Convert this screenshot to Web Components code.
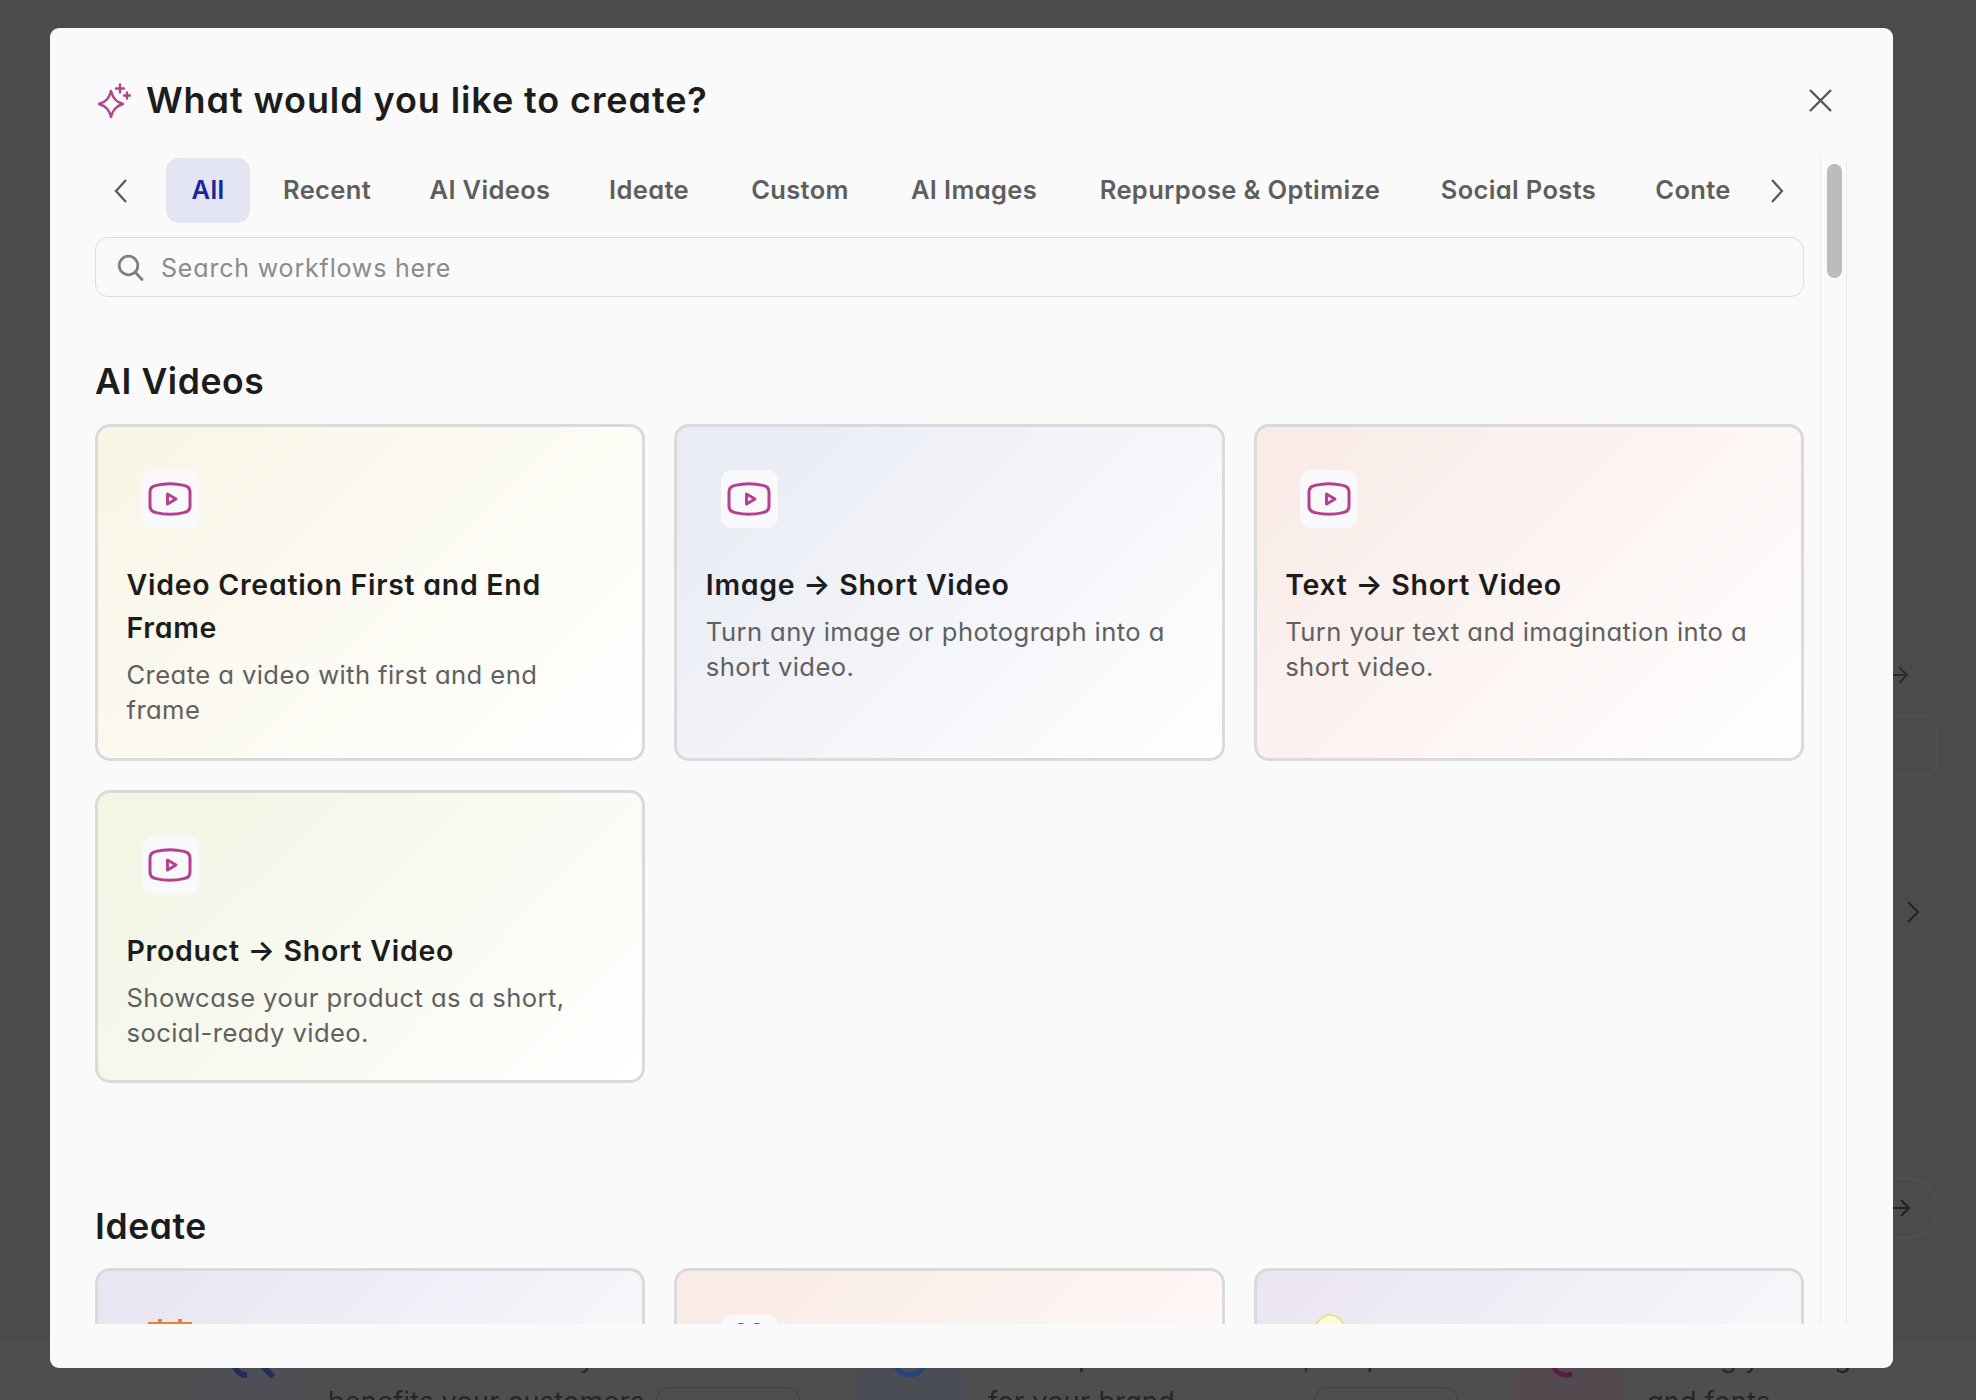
<!DOCTYPE html>
<html>
<head>
<meta charset="utf-8">
<style>
  html, body { margin: 0; height: 100%; }
  body { background: #4b4b4b; font-family: "Inter", "Liberation Sans", sans-serif; overflow: hidden; }
</style>
</head>
<body>
<page-backdrop></page-backdrop>
<create-dialog></create-dialog>

<script>
(function () {

  const FONT = `"Inter", "Liberation Sans", sans-serif`;

  const TABS = [
    ["All", 84, true], ["Recent", 140], ["AI Videos", 168], ["Ideate", 132], ["Custom", 152],
    ["AI Images", 178], ["Repurpose & Optimize", 336], ["Social Posts", 203], ["Conte", 128]
  ];

  const PLAY = `<svg viewBox="0 0 44 34" width="44" height="34" fill="none" stroke="#b5408f" stroke-width="3" stroke-linejoin="round">
    <path d="M2 10C2 6.500 4 4 8 3.400 17 1.400 27 1.400 36 3.400 40 4 42 6.500 42 10V24C42 27.500 40 30 36 30.600 27 32.600 17 32.600 8 30.600 4 30 2 27.500 2 24Z"/>
    <path d="M19.500 12 28 17 19.500 22Z"/>
  </svg>`;

  // ===== TAB STRIP =====
  class TabStrip extends HTMLElement {
    connectedCallback() {
      this.attachShadow({ mode: "open" }).innerHTML = `
        <style>
          :host { display: flex; align-items: center; height: 65px; }
          .nav { flex: none; width: 71px; padding-left: 18px; box-sizing: border-box; }
          .nav.next { width: 72px; padding-left: 37px; }
          svg { display: block; }
          .track { flex: 1; min-width: 0; display: flex; gap: 9px; overflow: hidden; }
          .tab { flex: none; height: 65px; line-height: 63px; text-align: center; font-size: 25.500px; font-weight: 600;
                 color: #5e5e5e; border-radius: 13px; font-feature-settings: "cv11"; white-space: nowrap; letter-spacing: .35px; }
          .tab.on { background: #e3e5f3; color: #1a249c; margin-right: -2px; }
        </style>
        <div class="nav"><svg width="16" height="26" viewBox="0 0 16 26" fill="none" stroke="#5a5a5a" stroke-width="2.300"><path d="M13 2 3 13l10 11"/></svg></div>
        <div class="track">${TABS.map(t => `<div class="tab${t[2] ? " on" : ""}" style="width:${t[1]}px">${t[0]}</div>`).join("")}</div>
        <div class="nav next"><svg width="16" height="26" viewBox="0 0 16 26" fill="none" stroke="#5a5a5a" stroke-width="2.300"><path d="M3 2l10 11L3 24"/></svg></div>
      `;
    }
  }

  // ===== SEARCH =====
  class SearchBox extends HTMLElement {
    connectedCallback() {
      this.attachShadow({ mode: "open" }).innerHTML = `
        <style>
          :host { display: flex; align-items: center; gap: 17px; height: 60px; box-sizing: border-box; margin-top: 14px;
                  border: 1.500px solid #dcdddd; border-radius: 13px; padding-left: 21px; }
          span { font-size: 25px; color: #8b8b8b; font-feature-settings: "cv11"; letter-spacing: .82px; margin-top: 2px; }
        </style>
        <svg width="27" height="27" viewBox="0 0 27 27" fill="none" stroke="#808080" stroke-width="2.800" stroke-linecap="round"><circle cx="11.500" cy="11.500" r="9.300"/><path d="M18.500 18.500 25 25.500"/></svg>
        <span>Search workflows here</span>
      `;
    }
  }

  // ===== WORKFLOW CARD =====
  class WorkflowCard extends HTMLElement {
    connectedCallback() {
      const from = this.getAttribute("tint") || "#f8f6e9";
      const to = this.getAttribute("tint-end") || "#ffffff";
      const plain = this.hasAttribute("plain");
      this.attachShadow({ mode: "open" }).innerHTML = `
        <style>
          :host { display: block; box-sizing: border-box; border: 3px solid #d9dada; border-radius: 15px; padding: 43.500px 32px 20px 28.500px;
                  background: linear-gradient(135deg, ${from} 0%, ${from} 10%, ${to} 100%) border-box; font-feature-settings: "cv11"; }
          .chip { width: 57px; height: 58px; margin-left: 15px; border-radius: 11px; background: ${plain ? "transparent" : "#f9f8fa"};
                  display: flex; align-items: center; justify-content: center; }
          h3 { margin: 34.500px 0 0; font-size: 28.500px; line-height: 43px; font-weight: 620; color: #1c1c1c; letter-spacing: .72px; }
          p { margin: 8px 0 0; font-size: 25.600px; line-height: 35.500px; font-weight: 400; color: #606060; letter-spacing: .42px; }
        </style>
        <div class="chip"><slot name="icon">${PLAY}</slot></div>
        <h3><slot name="title"></slot></h3>
        <p><slot name="text"></slot></p>
      `;
    }
  }

  // ===== SECTION =====
  class WorkflowSection extends HTMLElement {
    connectedCallback() {
      this.attachShadow({ mode: "open" }).innerHTML = `
        <style>
          :host { display: block; }
          h2 { margin: 0; height: 65.500px; line-height: 48px; font-size: 35.500px; font-weight: 620; color: #1c1c1c; font-feature-settings: "cv11"; letter-spacing: .6px; }
          .grid { display: grid; grid-template-columns: repeat(3, 1fr); gap: 29px 29px; }
        </style>
        <h2>${this.getAttribute("heading")}</h2>
        <div class="grid"><slot></slot></div>
      `;
    }
  }

  // ===== DIALOG =====
  class CreateDialog extends HTMLElement {
    connectedCallback() {
      this.attachShadow({ mode: "open" }).innerHTML = `
        <style>
          :host { position: absolute; left: 50px; top: 28px; width: 1843px; height: 1340px; box-sizing: border-box;
                  background: #fafafa; border-radius: 9px; padding: 0 46px 0 45px; display: flex; flex-direction: column; font-family: ${FONT}; }
          header { flex: none; height: 130px; display: flex; align-items: center; gap: 15px; padding-top: 15px; box-sizing: border-box; }
          h1 { margin: -2px 0 0; font-size: 36px; font-weight: 620; color: #1c1c1c; flex: 1; font-feature-settings: "cv11"; letter-spacing: .9px; }
          .close { margin-right: 14px; }
          .wrap { flex: none; height: 1166px; display: flex; gap: 16px; }
          .main { flex: 1; min-width: 0; display: flex; flex-direction: column; }
          .scroll { flex: 1; min-height: 0; overflow: hidden; padding-top: 61px; }
          .bar { flex: none; width: 27px; box-sizing: border-box; border-left: 1.500px solid #ececec; border-right: 1.500px solid #ececec; padding: 6px 4px 0 5.500px; }
          .thumb { height: 114px; border-radius: 8px; background: #bcbcbc; }
        </style>
        <header>
          <svg width="36" height="36" viewBox="0 0 36 36" fill="none" stroke="#b5408f" stroke-width="2.400" stroke-linejoin="round" stroke-linecap="round">
            <path d="M16 8C18 15.500 21 19 28 21 21 23 18 26.500 16 34 14 26.500 11 23 4 21 11 19 14 15.500 16 8Z"/>
            <path d="M25 1.500v8M21 5.500h8M32 9.500v6M29 12.500h6"/>
          </svg>
          <h1>What would you like to create?</h1>
          <svg class="close" width="25" height="25" viewBox="0 0 25 25" fill="none" stroke="#555" stroke-width="2.400"><path d="M2 2l21 21M23 2 2 23"/></svg>
        </header>
        <div class="wrap">
          <div class="main">
            <tab-strip></tab-strip>
            <search-box></search-box>
            <div class="scroll">
              <workflow-section heading="AI Videos">
                <workflow-card style="height:337px" tint="#f9f6e8" tint-end="#ffffff">
                  <span slot="title">Video Creation First and End Frame</span>
                  <span slot="text">Create a video with first and end frame</span>
                </workflow-card>
                <workflow-card style="height:337px" tint="#e9ecf4" tint-end="#ffffff">
                  <span slot="title">Image → Short Video</span>
                  <span slot="text">Turn any image or photograph into a short video.</span>
                </workflow-card>
                <workflow-card style="height:337px" tint="#f9ece8" tint-end="#ffffff">
                  <span slot="title">Text → Short Video</span>
                  <span slot="text">Turn your text and imagination into a short video.</span>
                </workflow-card>
                <workflow-card style="height:293px" tint="#f3f5e5" tint-end="#ffffff">
                  <span slot="title">Product → Short Video</span>
                  <span slot="text">Showcase your product as a short, social-ready video.</span>
                </workflow-card>
              </workflow-section>
              <workflow-section heading="Ideate" style="margin-top:120px">
                <workflow-card plain tint="#e9e5f2" tint-end="#fafafc">
                  <svg slot="icon" width="44" height="44" viewBox="0 0 44 44" style="overflow:visible" fill="none" stroke="#e8813a" stroke-width="4"><path d="M2 2h40v36H2zM12-3v6M32-3v6" /></svg>
                </workflow-card>
                <workflow-card tint="#f9ebe5" tint-end="#fffafa">
                  <svg slot="icon" width="44" height="44" viewBox="0 0 44 44" style="overflow:visible" fill="#a83a8a"><circle cx="14" cy="8.500" r="7.500"/><circle cx="30" cy="8.500" r="7.500"/></svg>
                </workflow-card>
                <workflow-card plain tint="#ebe6f2" tint-end="#fafafc">
                  <svg slot="icon" width="44" height="44" viewBox="0 0 44 44" style="overflow:visible"><ellipse cx="23" cy="10" rx="15" ry="17" fill="#fdfadf" stroke="#efe08a" stroke-width="2"/></svg>
                </workflow-card>
              </workflow-section>
            </div>
          </div>
          <div class="bar"><div class="thumb"></div></div>
        </div>
      `;
    }
  }

  // ===== GHOST ITEM BEHIND THE DIALOG =====
  class GhostItem extends HTMLElement {
    connectedCallback() {
      const pill = this.hasAttribute("pill");
      this.attachShadow({ mode: "open" }).innerHTML = `
        <style>
          :host { display: flex; flex: none; font-feature-settings: "cv11"; color: #262626; }
          .tile { flex: none; width: 110px; margin-right: 23px; height: 60px; display: flex; justify-content: center; background: var(--tile); }
          .text { flex: 1; min-width: 0; font-size: 27px; line-height: 41px; letter-spacing: .3px; white-space: nowrap; margin-top: -3px; }
          .row { display: flex; justify-content: space-between; margin-top: 3px; }
          .pill { box-sizing: border-box; height: 44px; width: 144px; margin-top: 6px; border: 1.500px solid #37463c; border-radius: 13px;
                  font-size: 18px; line-height: 40px; text-align: center; }
        </style>
        <div class="tile"><slot name="icon"></slot></div>
        <div class="text">
          <div>${this.getAttribute("line1")}</div>
          <div class="row"><span>${this.getAttribute("line2")}</span>${pill ? `<span class="pill">completed</span>` : ""}</div>
        </div>
      `;
    }
  }

  // ===== BACKDROP =====
  class PageBackdrop extends HTMLElement {
    connectedCallback() {
      this.attachShadow({ mode: "open" }).innerHTML = `
        <style>
          :host { display: flex; flex-direction: column; height: 1400px; overflow: hidden; }
          .top { flex: 1; min-height: 0; }
          .rail { margin-left: auto; width: 83px; display: flex; flex-direction: column; align-items: flex-start; color: #222; }
          .rail svg { display: block; }
          .ghost { box-sizing: border-box; width: 44px; height: 60px; border: 1.500px solid #555; border-left: 0; }
          .bottom { flex: none; height: 60px; display: flex; padding-left: 195px; background: #4e4e4e; }
        </style>
        <div class="top">
          <div class="rail">
            <svg style="margin-top:665px" width="16" height="20" viewBox="0 0 16 20" fill="none" stroke="#2a2a2a" stroke-width="1.800"><path d="M0 10h14M6 2l8 8-8 8"/></svg>
            <div class="ghost" style="margin-top:30px;border-radius:0 13px 13px 0"></div>
            <svg style="margin:126px 0 0 14px" width="12" height="22" viewBox="0 0 12 22" fill="none" stroke="#222" stroke-width="2"><path d="M1 1l10 10L1 21"/></svg>
            <div class="ghost" style="margin-top:255px;border-radius:0 30px 30px 0;display:flex;align-items:center">
              <svg width="18" height="20" viewBox="0 0 18 20" fill="none" stroke="#222" stroke-width="2"><path d="M0 10h16M8 2l8 8-8 8"/></svg>
            </div>
            <svg style="margin:114px 0 0 8px" width="11" height="18" viewBox="0 0 11 18" fill="none" stroke="#222" stroke-width="2"><path d="M1 1l8 8-8 8"/></svg>
          </div>
        </div>
        <div class="bottom">
          <ghost-item pill style="width:605px;margin-right:55px;--tile:#4e4f54" line1="Communicate how your brand" line2="benefits your customers">
            <svg slot="icon" width="50" height="38" viewBox="0 0 50 38" fill="none" stroke="#232c5c" stroke-width="6"><path d="M10 27c2 5 7 8 12 8M38 26l10 11"/></svg>
          </ghost-item>
          <ghost-item pill style="width:603px;margin-right:56px;--tile:#4a4e54" line1="Ideate personalized ads, shapes" line2="for your brand">
            <svg slot="icon" width="50" height="38" viewBox="0 0 50 38" fill="none" stroke="#24467a" stroke-width="5"><path d="M8 20c2 9 9 15 17 15s15-6 17-15"/></svg>
          </ghost-item>
          <ghost-item style="width:330px;--tile:#524a4e" line1="Saving your logo" line2="and fonts">
            <svg slot="icon" width="50" height="38" viewBox="0 0 50 38" fill="none" stroke="#5a1a45" stroke-width="5"><path d="M8 22c1 8 7 13 16 13l4-1"/></svg>
          </ghost-item>
        </div>
      `;
    }
  }

  customElements.define("tab-strip", TabStrip);
  customElements.define("search-box", SearchBox);
  customElements.define("workflow-card", WorkflowCard);
  customElements.define("workflow-section", WorkflowSection);
  customElements.define("create-dialog", CreateDialog);
  customElements.define("ghost-item", GhostItem);
  customElements.define("page-backdrop", PageBackdrop);

})();
</script>
</body>
</html>
